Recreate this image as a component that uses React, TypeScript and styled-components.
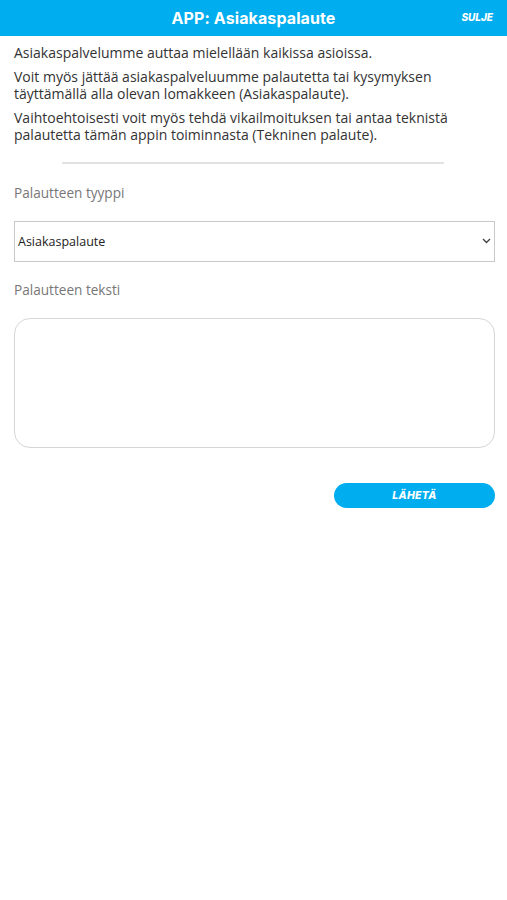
import React, { useState } from 'react';
import styled, { createGlobalStyle } from 'styled-components';

const GlobalStyle = createGlobalStyle`
  * { box-sizing: border-box; }
  body {
    margin: 0;
    background: #fff;
    font-family: 'Open Sans', 'Noto Sans', sans-serif;
  }
`;

const Header = styled.header`
  position: relative;
  height: 36px;
  background-color: #00adee;
  display: flex;
  align-items: center;
  justify-content: center;
`;

const Title = styled.h1`
  margin: 0;
  color: #fff;
  font-family: 'Inter', 'Open Sans', sans-serif;
  font-size: 16px;
  font-weight: 700;
  letter-spacing: 0.1px;
`;

const CloseButton = styled.button`
  position: absolute;
  right: 14px;
  top: 11px;
  border: none;
  background: none;
  padding: 0;
  color: #fff;
  font-family: 'Inter', sans-serif;
  font-size: 10px;
  font-weight: 800;
  font-style: italic;
  cursor: pointer;
`;

const Content = styled.main`
  padding: 8px 12px 0 14px;
`;

const Paragraph = styled.p`
  margin: 0 0 7px;
  color: #333;
  font-size: 14px;
  line-height: 17px;
`;

const Divider = styled.hr`
  width: 382px;
  margin: 19px auto 20px 48px;
  border: none;
  border-top: 2px solid #e2e2e2;
`;

const Label = styled.label`
  display: block;
  color: #777;
  font-size: 13.6px;
  line-height: 17px;
  margin-bottom: 20px;
`;

const SelectWrap = styled.div`
  position: relative;
  margin-bottom: 19px;
`;

const Select = styled.select`
  appearance: none;
  width: 100%;
  height: 41px;
  padding: 0 24px 0 3px;
  border: 1px solid #c9c9c9;
  border-radius: 0;
  background: #fff;
  color: #222;
  font-family: 'Open Sans', sans-serif;
  font-size: 12.5px;
`;

const Chevron = styled.svg`
  position: absolute;
  right: 4px;
  top: 17px;
  pointer-events: none;
`;

const TextArea = styled.textarea`
  display: block;
  width: 100%;
  height: 130px;
  border: 1px solid #d6d6d6;
  border-radius: 16px;
  resize: none;
  font-family: 'Open Sans', sans-serif;
  font-size: 13px;
  outline: none;
`;

const Actions = styled.div`
  display: flex;
  justify-content: flex-end;
  margin-top: 35px;
`;

const SendButton = styled.button`
  width: 161px;
  height: 25px;
  border: none;
  border-radius: 13px;
  background-color: #00adee;
  color: #fff;
  font-family: 'Inter', sans-serif;
  font-size: 10.5px;
  font-weight: 800;
  font-style: italic;
  letter-spacing: 0.3px;
  cursor: pointer;
`;

const App = () => {
  const [type, setType] = useState('asiakas');
  const [text, setText] = useState('');

  return (
    <>
      <GlobalStyle />
      <Header>
        <Title>APP: Asiakaspalaute</Title>
        <CloseButton>SULJE</CloseButton>
      </Header>
      <Content>
        <Paragraph>Asiakaspalvelumme auttaa mielellään kaikissa asioissa.</Paragraph>
        <Paragraph>
          Voit myös jättää asiakaspalveluumme palautetta tai kysymyksen täyttämällä alla olevan
          lomakkeen (Asiakaspalaute).
        </Paragraph>
        <Paragraph>
          Vaihtoehtoisesti voit myös tehdä vikailmoituksen tai antaa teknistä palautetta tämän
          appin toiminnasta (Tekninen palaute).
        </Paragraph>
        <Divider />
        <Label htmlFor="type">Palautteen tyyppi</Label>
        <SelectWrap>
          <Select id="type" value={type} onChange={(e) => setType(e.target.value)}>
            <option value="asiakas">Asiakaspalaute</option>
            <option value="tekninen">Tekninen palaute</option>
          </Select>
          <Chevron width="9" height="6" viewBox="0 0 9 6">
            <path d="M1 1l3.5 3.5L8 1" fill="none" stroke="#444" strokeWidth="1.4" />
          </Chevron>
        </SelectWrap>
        <Label htmlFor="text">Palautteen teksti</Label>
        <TextArea id="text" value={text} onChange={(e) => setText(e.target.value)} />
        <Actions>
          <SendButton>LÄHETÄ</SendButton>
        </Actions>
      </Content>
    </>
  );
};

export default App;
